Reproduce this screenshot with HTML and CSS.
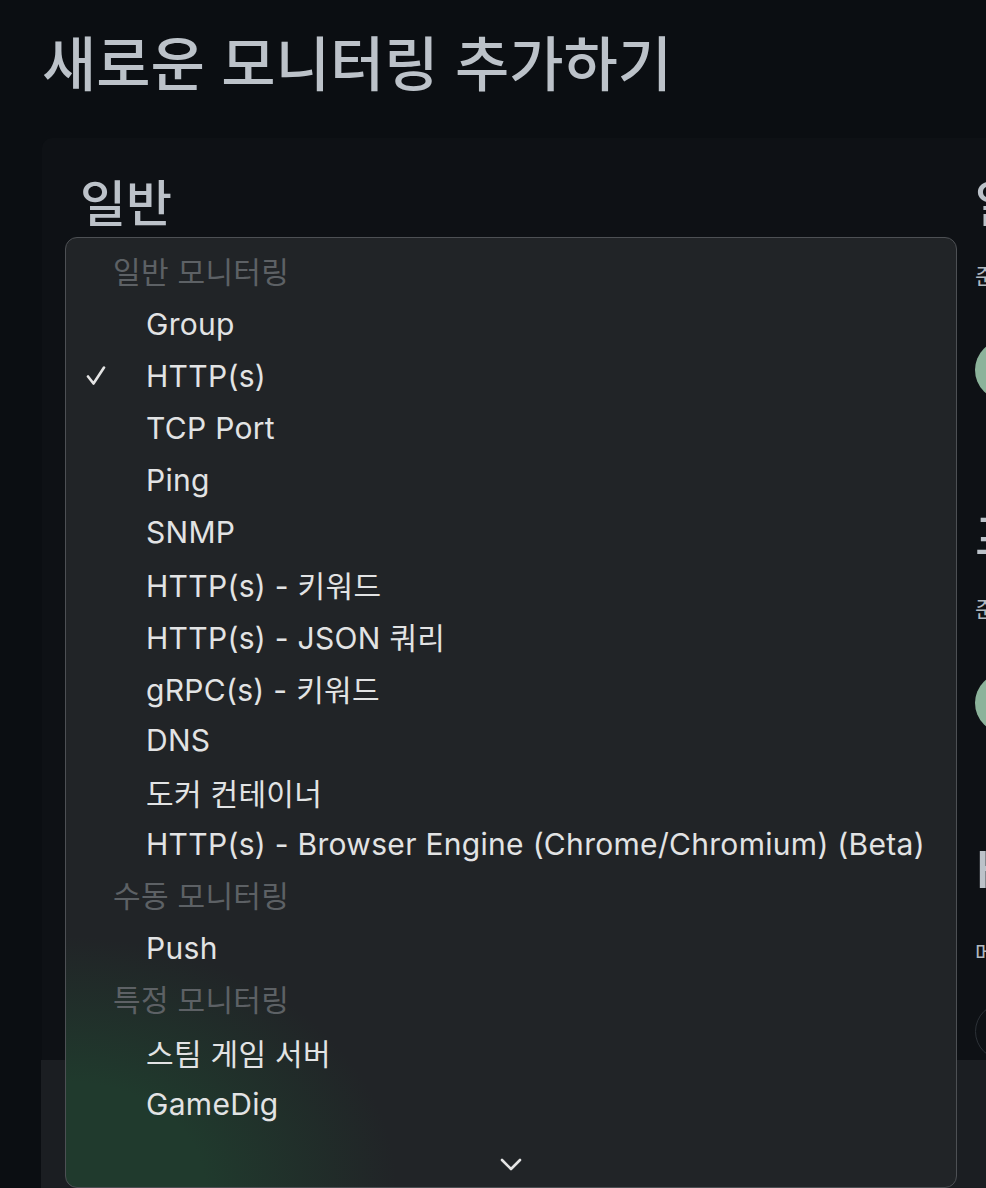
FILE: index.html
```html
<!DOCTYPE html>
<html lang="ko">
<head>
<meta charset="utf-8">
<title>새로운 모니터링 추가하기</title>
<link rel="stylesheet" href="styles.css">
</head>
<body>
<main class="page">
  <h1 class="page-title">새로운 모니터링 추가하기</h1>

  <section class="card">
    <div class="cols">
      <div class="col-main">
        <h2 class="section-title">일반</h2>
        <div class="field">
          <div class="select-box"></div>
        </div>
      </div>

      <div class="col-side">
        <h2 class="section-title">알림</h2>
        <p class="hint">준비되지 않음. 설정이 필요합니다.</p>
        <button class="pill-btn" type="button">알림 설정</button>

        <h2 class="section-title gap">프록시</h2>
        <p class="hint">준비되지 않음. 설정이 필요합니다.</p>
        <button class="pill-btn" type="button">프록시 설정</button>

        <h2 class="section-title gap">HTTP 옵션</h2>
        <label class="field-label">메서드</label>
        <div class="select-box side">GET</div>
      </div>
    </div>
  </section>
</main>

<div class="bottom-bar">
  <button class="save-btn" type="button"></button>
</div>

<div class="menu" role="listbox">
  <div class="menu-list">
    <div class="menu-group">일반 모니터링</div>
    <div class="menu-item"><span class="check"></span>Group</div>
    <div class="menu-item selected"><span class="check"><svg width="20" height="20" viewBox="0 0 20 20"><polyline points="2,10.5 7.5,17.5 18,1.5" fill="none" stroke="#e4e4e4" stroke-width="2.6" stroke-linecap="round" stroke-linejoin="round"/></svg></span>HTTP(s)</div>
    <div class="menu-item"><span class="check"></span>TCP Port</div>
    <div class="menu-item"><span class="check"></span>Ping</div>
    <div class="menu-item"><span class="check"></span>SNMP</div>
    <div class="menu-item"><span class="check"></span>HTTP(s) - 키워드</div>
    <div class="menu-item"><span class="check"></span>HTTP(s) - JSON 쿼리</div>
    <div class="menu-item"><span class="check"></span>gRPC(s) - 키워드</div>
    <div class="menu-item"><span class="check"></span>DNS</div>
    <div class="menu-item"><span class="check"></span>도커 컨테이너</div>
    <div class="menu-item"><span class="check"></span>HTTP(s) - Browser Engine (Chrome/Chromium) (Beta)</div>
    <div class="menu-group">수동 모니터링</div>
    <div class="menu-item"><span class="check"></span>Push</div>
    <div class="menu-group">특정 모니터링</div>
    <div class="menu-item"><span class="check"></span>스팀 게임 서버</div>
    <div class="menu-item"><span class="check"></span>GameDig</div>
  </div>
  <div class="scroll-arrow">
    <svg width="22" height="14" viewBox="0 0 22 14"><polyline points="2,2 11,11 20,2" fill="none" stroke="#e4e4e4" stroke-width="2.6" stroke-linecap="round" stroke-linejoin="round"/></svg>
  </div>
</div>
</body>
</html>
```

FILE: styles.css
```css
html, body {
  margin: 0;
  padding: 0;
}

body {
  background: #0b0e12;
  color: #bcc2c9;
  font-family: "Noto Sans CJK KR", "Noto Sans", sans-serif;
  width: 986px;
  height: 1188px;
  overflow: hidden;
  position: relative;
}

.page {
  padding: 25px 0 0 42px;
}

.page-title {
  margin: 0 0 41px 0;
  font-size: 59px;
  line-height: 72px;
  font-weight: 500;
  color: #bcc2c9;
}

/* form card */
.card {
  width: 1100px;
  min-height: 1100px;
  background: #0e1115;
  border-radius: 10px;
  padding: 33px 38px;
  box-sizing: border-box;
}

.cols {
  display: grid;
  grid-template-columns: 871px 1fr;
  column-gap: 24px;
}

.section-title {
  margin: 0;
  font-size: 50px;
  line-height: 58px;
  font-weight: 500;
  color: #bcc2c9;
  white-space: nowrap;
}

.section-title.gap {
  margin-top: 104px;
}

.field {
  margin-top: 16px;
}

.select-box {
  height: 57px;
  border: 1px solid #2c3137;
  border-radius: 29px;
  box-sizing: border-box;
  padding: 0 24px;
  line-height: 55px;
  font-size: 22px;
  color: #bcc2c9;
}

.hint {
  margin: 29px 0 0 0;
  font-size: 22px;
  line-height: 33px;
  color: #b3b9c0;
  white-space: nowrap;
}

.pill-btn {
  display: block;
  margin-top: 49px;
  height: 60px;
  padding: 0 30px;
  border: 0;
  border-radius: 30px;
  background: #8cb39b;
  color: #0b0e12;
  font-family: inherit;
  font-size: 22px;
  white-space: nowrap;
}

.field-label {
  display: block;
  margin-top: 40px;
  font-size: 22px;
  line-height: 33px;
  color: #b3b9c0;
  white-space: nowrap;
}

.select-box.side {
  margin-top: 35px;
  width: 300px;
}

/* fixed save bar along the bottom */
.bottom-bar {
  position: absolute;
  left: 41px;
  right: 0;
  bottom: 0;
  height: 128px;
  background: #1b1e22;
  padding: 24px 40px;
  box-sizing: border-box;
}

.save-btn {
  width: 160px;
  height: 60px;
  border: 0;
  border-radius: 30px;
  background: #5cdd8b;
}

/* open native select popup */
.menu {
  position: absolute;
  left: 65px;
  top: 237px;
  width: 892px;
  height: 951px;
  box-sizing: border-box;
  border: 1px solid #4d5054;
  border-radius: 12px;
  background-color: #212427;
  background-image: radial-gradient(ellipse 330px 250px at 0px 100%, #203a2d 0%, #203a2d 42%, rgba(33, 36, 39, 0) 100%);
  display: flex;
  flex-direction: column;
  padding-top: 8px;
  font-family: Inter, "Noto Sans CJK KR", sans-serif;
  font-size: 30px;
  letter-spacing: 0.3px;
  z-index: 2;
}

.menu-group {
  height: 52px;
  line-height: 52px;
  padding-left: 47px;
  color: #5d6165;
  white-space: nowrap;
}

.menu-item {
  display: flex;
  align-items: center;
  height: 52px;
  color: #e2e3e4;
  white-space: nowrap;
}

.check {
  width: 80px;
  flex: none;
  box-sizing: border-box;
  padding-left: 20px;
  display: flex;
  align-items: center;
}

.check svg {
  display: block;
}

.scroll-arrow {
  margin-top: auto;
  height: 44px;
  display: flex;
  align-items: center;
  justify-content: center;
}

.scroll-arrow svg {
  display: block;
}
```
